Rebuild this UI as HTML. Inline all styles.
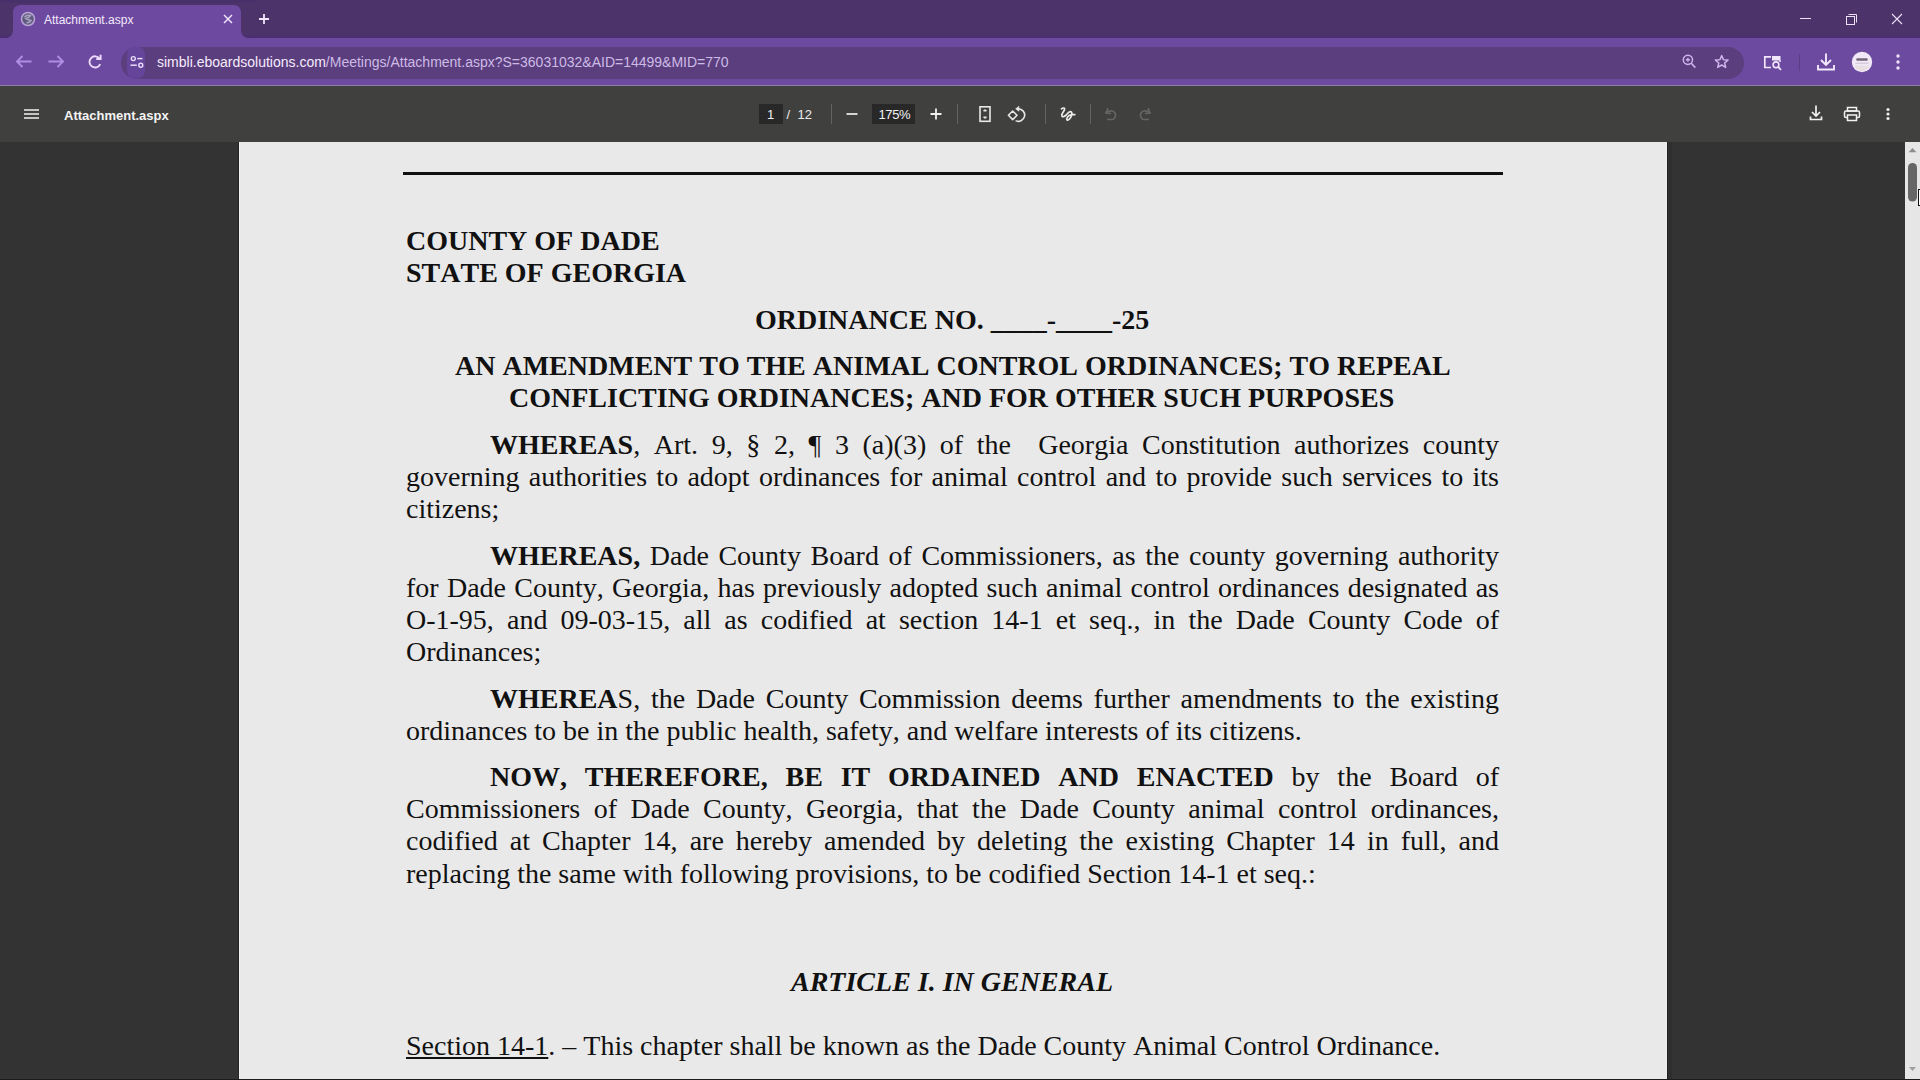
<!DOCTYPE html>
<html><head><meta charset="utf-8">
<style>
*{margin:0;padding:0;box-sizing:border-box}
html,body{width:1920px;height:1080px;overflow:hidden;background:#333333;font-family:"Liberation Sans",sans-serif}
.abs{position:absolute}
#tabstrip{left:0;top:0;width:1920px;height:38px;background:#4c346b}
#tab{left:13px;top:5px;width:228px;height:40px;background:#6c4a9f;border-radius:10px 10px 0 0}
#toolbar{left:0;top:38px;width:1920px;height:47px;background:#6c4a9f}
#tbline{left:0;top:85px;width:1920px;height:1px;background:#927fa8}
#omni{left:121px;top:46.5px;width:1623px;height:32px;background:#5b3e7e;border-radius:16px}
#pdftb{left:0;top:86px;width:1920px;height:56px;background:#40403e}
#viewer{left:0;top:142px;width:1920px;height:938px;background:#333333}
#page{left:239px;top:142px;width:1428px;height:937px;background:#e9e9e9}
#sb{left:1905px;top:142px;width:15px;height:938px;background:#e6e6e6}
.t{position:absolute;white-space:pre;font-family:"Liberation Serif",serif;font-size:28px;line-height:32px;color:#111;font-kerning:none}
.b{font-weight:bold}
.j{width:1093px;text-align:justify;text-align-last:justify}
.ui{position:absolute;white-space:pre;font-family:"Liberation Sans",sans-serif;color:#f0e8fa}
</style></head><body>
<div id="tabstrip" class="abs"></div>
<div class="abs" style="left:0;top:0;width:255px;height:3px;background:#48306a"></div>
<div class="abs" style="left:0;top:35px;width:1920px;height:3px;background:#4a3070"></div>
<div id="toolbar" class="abs"></div>
<!-- active tab with flares -->
<svg class="abs" style="left:0;top:0" width="270" height="40" viewBox="0 0 270 40">
  <path d="M3 38.5 Q13 38.5 13 30 L13 13 Q13 5 21 5 L233 5 Q241 5 241 13 L241 30 Q241 38.5 251 38.5 Z" fill="#6d499f"/>
</svg>
<div id="tbline" class="abs"></div>
<div id="omni" class="abs"></div>
<div id="pdftb" class="abs"></div>
<div id="viewer" class="abs"></div>
<div id="page" class="abs"></div>
<div id="sb" class="abs"></div>
<div class="abs" style="left:238px;top:142px;width:1px;height:937px;background:#242424"></div>
<div class="abs" style="left:239px;top:142px;width:1px;height:937px;background:#f1f1f1"></div>
<div class="abs" style="left:1666px;top:142px;width:1px;height:937px;background:#efefef"></div>
<div class="abs" style="left:1667px;top:142px;width:1px;height:937px;background:#1f1f1f"></div>
<div class="abs" style="left:1669px;top:142px;width:3px;height:937px;background:#2e2e2e"></div>

<!-- favicon globe -->
<svg class="abs" style="left:20px;top:11px" width="16" height="16" viewBox="0 0 16 16">
  <circle cx="8" cy="8" r="6.5" fill="#5f5a80" stroke="#b9a6d6" stroke-width="1.5"/>
  <path d="M4.5 6 Q7 3.5 10.5 4.5 Q9 7 6 7.5 Q8 9 11 9.5 Q10 12 6.5 11.5" fill="none" stroke="#a8a3bd" stroke-width="1.6"/>
</svg>
<div class="ui" style="left:44px;top:13px;font-size:12px;color:#f3eafc">Attachment.aspx</div>
<!-- tab close -->
<svg class="abs" style="left:222px;top:13px" width="12" height="12" viewBox="0 0 12 12">
  <path d="M2 2 L10 10 M10 2 L2 10" stroke="#efe2fb" stroke-width="1.5"/>
</svg>
<!-- new tab -->
<svg class="abs" style="left:257px;top:12px" width="14" height="14" viewBox="0 0 14 14">
  <path d="M7 2 V12 M2 7 H12" stroke="#f1e6fb" stroke-width="1.8"/>
</svg>
<!-- window controls -->
<svg class="abs" style="left:1790px;top:8px" width="130" height="22" viewBox="0 0 130 22">
  <path d="M10 10.5 H21" stroke="#ece0f7" stroke-width="1"/>
  <rect x="56.5" y="8.5" width="8" height="8" fill="none" stroke="#ece0f7" stroke-width="1"/>
  <path d="M58.5 6.5 H66.5 V14.5" fill="none" stroke="#ece0f7" stroke-width="1"/>
  <path d="M102 6 L112 16 M112 6 L102 16" stroke="#ece0f7" stroke-width="1.1"/>
</svg>
<!-- nav icons -->
<svg class="abs" style="left:0;top:44px" width="160" height="36" viewBox="0 0 160 36">
  <path d="M17 17.5 H31.5 M22.5 12 L17 17.5 L22.5 23" fill="none" stroke="#ad8ee0" stroke-width="1.9"/>
  <path d="M63 17.5 H48.5 M57.5 12 L63 17.5 L57.5 23" fill="none" stroke="#ad8ee0" stroke-width="1.9"/>
  <path d="M99.6 14.6 A5.6 5.6 0 1 0 100.2 20.2" fill="none" stroke="#eedcfd" stroke-width="1.9"/>
  <path d="M96.3 15 H100.6 V10.7" fill="none" stroke="#eedcfd" stroke-width="1.9"/>
  <rect x="127" y="2.5" width="18" height="32" rx="8" fill="#64459a"/>
  <circle cx="133.3" cy="14.6" r="2" fill="none" stroke="#ecdcfc" stroke-width="1.4"/>
  <path d="M137.3 14.6 H142.5" stroke="#ecdcfc" stroke-width="1.5"/>
  <circle cx="140.8" cy="21.2" r="2" fill="none" stroke="#ecdcfc" stroke-width="1.4"/>
  <path d="M130.5 21.2 H136.8" stroke="#ecdcfc" stroke-width="1.5"/>
</svg>
<div class="ui" style="left:157px;top:54px;font-size:14px;color:#f5ecfd">simbli.eboardsolutions.com<span style="color:#cdbbe6">/Meetings/Attachment.aspx?S=36031032&amp;AID=14499&amp;MID=770</span></div>
<!-- right omnibox icons -->
<svg class="abs" style="left:1670px;top:46px" width="70" height="32" viewBox="0 0 70 32">
  <circle cx="17.9" cy="13.8" r="4.6" fill="none" stroke="#cdb4ec" stroke-width="1.5"/>
  <path d="M17.9 11.8 V15.8 M15.9 13.8 H19.9" stroke="#cdb4ec" stroke-width="1.4"/>
  <path d="M21.3 17.3 L25.3 21.6" stroke="#cdb4ec" stroke-width="1.6"/>
  <path d="M51.7 9.6 L53.5 13.8 L58 14.1 L54.6 17 L55.7 21.4 L51.7 19 L47.7 21.4 L48.8 17 L45.4 14.1 L49.9 13.8 Z" fill="none" stroke="#cdb4ec" stroke-width="1.5" stroke-linejoin="round"/>
</svg>
<!-- lens/reading icon -->
<svg class="abs" style="left:1760px;top:52px" width="24" height="22" viewBox="0 0 24 22">
  <path d="M11 4.8 H4.8 V15.5 H11" fill="none" stroke="#f1e6fc" stroke-width="1.7"/>
  <rect x="12" y="4" width="8.5" height="4.5" fill="#f1e6fc"/>
  <path d="M20 8 V10" stroke="#f1e6fc" stroke-width="1.5"/>
  <circle cx="16" cy="12.8" r="2.9" fill="none" stroke="#f1e6fc" stroke-width="1.6"/>
  <path d="M18.2 15 L21 17.8" stroke="#f1e6fc" stroke-width="1.8"/>
</svg>
<div class="abs" style="left:1799px;top:54px;width:1px;height:17px;background:#5a3f86"></div>
<!-- download -->
<svg class="abs" style="left:1815px;top:51px" width="22" height="22" viewBox="0 0 22 22">
  <path d="M11 2.5 V14 M6 9 L11 14 L16 9" fill="none" stroke="#f3e8fc" stroke-width="1.9"/>
  <path d="M3 14 V18.5 H19 V14" fill="none" stroke="#f3e8fc" stroke-width="1.9"/>
</svg>
<!-- avatar -->
<svg class="abs" style="left:1851px;top:51px" width="22" height="22" viewBox="0 0 22 22">
  <circle cx="11" cy="11" r="10.2" fill="#f1e8f7"/>
  <path d="M6.5 8.5 H15.5" stroke="#6f6575" stroke-width="2.6" stroke-linecap="round"/>
  <path d="M4.5 12.2 H17.5" stroke="#cfc6d6" stroke-width="1.2"/>
  <path d="M4 14.5 H18 V16 Q15 20 11 20 Q7 20 4 16 Z" fill="#e8dfe2"/>
</svg>
<!-- menu dots -->
<svg class="abs" style="left:1891px;top:51px" width="14" height="22" viewBox="0 0 14 22">
  <circle cx="7" cy="5" r="1.7" fill="#efe3fb"/><circle cx="7" cy="11" r="1.7" fill="#efe3fb"/><circle cx="7" cy="17" r="1.7" fill="#efe3fb"/>
</svg>

<!-- PDF toolbar -->
<svg class="abs" style="left:22px;top:104px" width="20" height="20" viewBox="0 0 20 20">
  <path d="M2 6 H17 M2 10 H17 M2 14 H17" stroke="#f1f1f1" stroke-width="1.6"/>
</svg>
<div class="ui" style="left:64px;top:107.5px;font-size:13px;font-weight:bold;color:#f4f4f4">Attachment.aspx</div>
<div class="abs" style="left:759px;top:104px;width:24px;height:20px;background:#282828"></div>
<div class="ui" style="left:767px;top:107px;font-size:13px;color:#f1f1f1">1</div>
<div class="ui" style="left:786.5px;top:107px;font-size:13px;color:#ececec">/</div><div class="ui" style="left:797.5px;top:107px;font-size:13px;color:#ececec">12</div>
<div class="abs" style="left:831px;top:104px;width:1px;height:20px;background:#636363"></div>
<svg class="abs" style="left:842px;top:104px" width="20" height="20" viewBox="0 0 20 20">
  <path d="M4.5 10 H15.5" stroke="#f0f0f0" stroke-width="1.7"/>
</svg>
<div class="abs" style="left:872px;top:104px;width:43px;height:20px;background:#282828"></div>
<div class="ui" style="left:878.5px;top:107px;font-size:13px;color:#f3f3f3;letter-spacing:-0.4px">175%</div>
<svg class="abs" style="left:926px;top:104px" width="20" height="20" viewBox="0 0 20 20">
  <path d="M4.5 10 H15.5 M10 4.5 V15.5" stroke="#f0f0f0" stroke-width="1.8"/>
</svg>
<div class="abs" style="left:957px;top:104px;width:1px;height:20px;background:#636363"></div>
<svg class="abs" style="left:975px;top:104px" width="20" height="20" viewBox="0 0 20 20">
  <rect x="5" y="2.8" width="10" height="14.5" fill="none" stroke="#e8e8e8" stroke-width="1.6"/>
  <path d="M8.5 7 L10 5.5 L11.5 7 Z M8.5 13 L10 14.5 L11.5 13 Z" fill="#e8e8e8" stroke="#e8e8e8" stroke-width="1"/>
</svg>
<svg class="abs" style="left:1000px;top:98px" width="80" height="30" viewBox="0 0 80 30">
  <path d="M8.4 17.3 L12.7 13 L17 17.3 L12.7 21.6 Z" fill="none" stroke="#e6e6e6" stroke-width="1.6" stroke-linejoin="round"/>
  <path d="M18.2 10.9 A6.2 6.2 0 1 1 15.6 22.6" fill="none" stroke="#e6e6e6" stroke-width="1.6"/>
  <path d="M15.2 10.8 L19.2 7.8 L19.2 13.8 Z" fill="#e6e6e6"/>
</svg>
<div class="abs" style="left:1045px;top:104px;width:1px;height:20px;background:#636363"></div>
<svg class="abs" style="left:1000px;top:98px" width="80" height="30" viewBox="0 0 80 30">
  <path d="M61.5 10.8 C63 9.5 65 9.8 64.5 11.5 C64 13.5 61.5 15.5 61.8 17.5 C62 19.5 64.5 18.8 66 17.2 C67.5 15.6 68.5 13.6 70.3 13.6 C72.4 13.6 72.2 17 70.6 19.6 C69.6 21.3 67.8 22.6 67 21.8 C66.2 20.8 68 17.2 71 16.8 C72.3 16.6 73.5 16.7 74.8 16.6" fill="none" stroke="#ececec" stroke-width="1.7" stroke-linecap="round" stroke-linejoin="round"/>
</svg>
<div class="abs" style="left:1090px;top:104px;width:1px;height:20px;background:#636363"></div>
<svg class="abs" style="left:1102px;top:104px" width="52" height="20" viewBox="0 0 52 20">
  <path d="M6 4 L4 9 L9 9.5 M4.5 8.5 Q7 6.5 10 7 Q14 8 13.5 12 Q13 15.5 9 15.5 L5 15.5" fill="none" stroke="#666" stroke-width="1.6"/>
  <path d="M46 4 L48 9 L43 9.5 M47.5 8.5 Q45 6.5 42 7 Q38 8 38.5 12 Q39 15.5 43 15.5 L47 15.5" fill="none" stroke="#666" stroke-width="1.6"/>
</svg>
<svg class="abs" style="left:1806px;top:104px" width="20" height="20" viewBox="0 0 20 20">
  <path d="M10 1.5 V12 M6 8 L10 12 L14 8" fill="none" stroke="#f2f2f2" stroke-width="1.7"/>
  <path d="M4.5 12.5 V15.5 H15.5 V12.5" fill="none" stroke="#f2f2f2" stroke-width="1.7"/>
</svg>
<svg class="abs" style="left:1842px;top:104px" width="20" height="20" viewBox="0 0 20 20">
  <rect x="5.5" y="3.5" width="9" height="3.5" fill="none" stroke="#f2f2f2" stroke-width="1.5"/>
  <rect x="2.5" y="7" width="15" height="6.5" rx="1.5" fill="none" stroke="#f2f2f2" stroke-width="1.5"/>
  <rect x="5.5" y="11" width="9" height="5.5" fill="#40403e" stroke="#f2f2f2" stroke-width="1.5"/>
</svg>
<svg class="abs" style="left:1878px;top:104px" width="20" height="20" viewBox="0 0 20 20">
  <circle cx="10" cy="5.5" r="1.6" fill="#efefef"/><circle cx="10" cy="10" r="1.6" fill="#efefef"/><circle cx="10" cy="14.5" r="1.6" fill="#efefef"/>
</svg>

<!-- scrollbar -->
<svg class="abs" style="left:1905px;top:141px" width="15" height="939" viewBox="0 0 15 939">
  <path d="M3.5 11.3 L7.5 7 L11.5 11.3 Z" fill="#8e8e8e"/>
  <rect x="3" y="22" width="9" height="38.5" rx="4.5" fill="#666"/>
  <path d="M4 926 L7.5 930 L11 926 Z" fill="#a0a0a0"/>
</svg>

<!-- document -->
<div class="abs" style="left:403px;top:172px;width:1100px;height:3px;background:#111"></div>
<div class="t b" style="left:406px;top:225px">COUNTY OF DADE</div>
<div class="t b" style="left:406px;top:257px">STATE OF GEORGIA</div>
<div class="t b" style="left:755px;top:304px">ORDINANCE NO. ____-____-25</div>
<div class="t b" style="left:455px;top:350px">AN AMENDMENT TO THE ANIMAL CONTROL ORDINANCES; TO REPEAL</div>
<div class="t b" style="left:509px;top:382px">CONFLICTING ORDINANCES; AND FOR OTHER SUCH PURPOSES</div>

<div class="t j" style="left:406px;top:429px;text-indent:84px"><b>WHEREAS</b>, Art. 9, § 2, ¶ 3 (a)(3) of the  Georgia Constitution authorizes county</div>
<div class="t j" style="left:406px;top:461px">governing authorities to adopt ordinances for animal control and to provide such services to its</div>
<div class="t" style="left:406px;top:493px">citizens;</div>

<div class="t j" style="left:406px;top:540px;text-indent:84px"><b>WHEREAS,</b> Dade County Board of Commissioners, as the county governing authority</div>
<div class="t j" style="left:406px;top:572px">for Dade County, Georgia, has previously adopted such animal control ordinances designated as</div>
<div class="t j" style="left:406px;top:604px">O-1-95, and 09-03-15, all as codified at section 14-1 et seq., in the Dade County Code of</div>
<div class="t" style="left:406px;top:636px">Ordinances;</div>

<div class="t j" style="left:406px;top:683px;text-indent:84px"><b>WHEREA</b>S, the Dade County Commission deems further amendments to the existing</div>
<div class="t" style="left:406px;top:715px">ordinances to be in the public health, safety, and welfare interests of its citizens.</div>

<div class="t j" style="left:406px;top:761px;text-indent:84px"><b>NOW, THEREFORE, BE IT ORDAINED AND ENACTED</b> by the Board of</div>
<div class="t j" style="left:406px;top:793px">Commissioners of Dade County, Georgia, that the Dade County animal control ordinances,</div>
<div class="t j" style="left:406px;top:825px">codified at Chapter 14, are hereby amended by deleting the existing Chapter 14 in full, and</div>
<div class="t" style="left:406px;top:858px">replacing the same with following provisions, to be codified Section 14-1 et seq.:</div>

<div class="t b" style="left:791px;top:966px;font-style:italic">ARTICLE I. IN GENERAL</div>
<div class="t" style="left:406px;top:1030px"><u>Section 14-1</u>. – This chapter shall be known as the Dade County Animal Control Ordinance.</div>
<div class="abs" style="left:0;top:1079px;width:1920px;height:1px;background:#1c1c1c"></div>
<div class="abs" style="left:1918px;top:189px;width:2px;height:17px;border:1px solid #111;border-right:none;background:#fff"></div>
</body></html>
